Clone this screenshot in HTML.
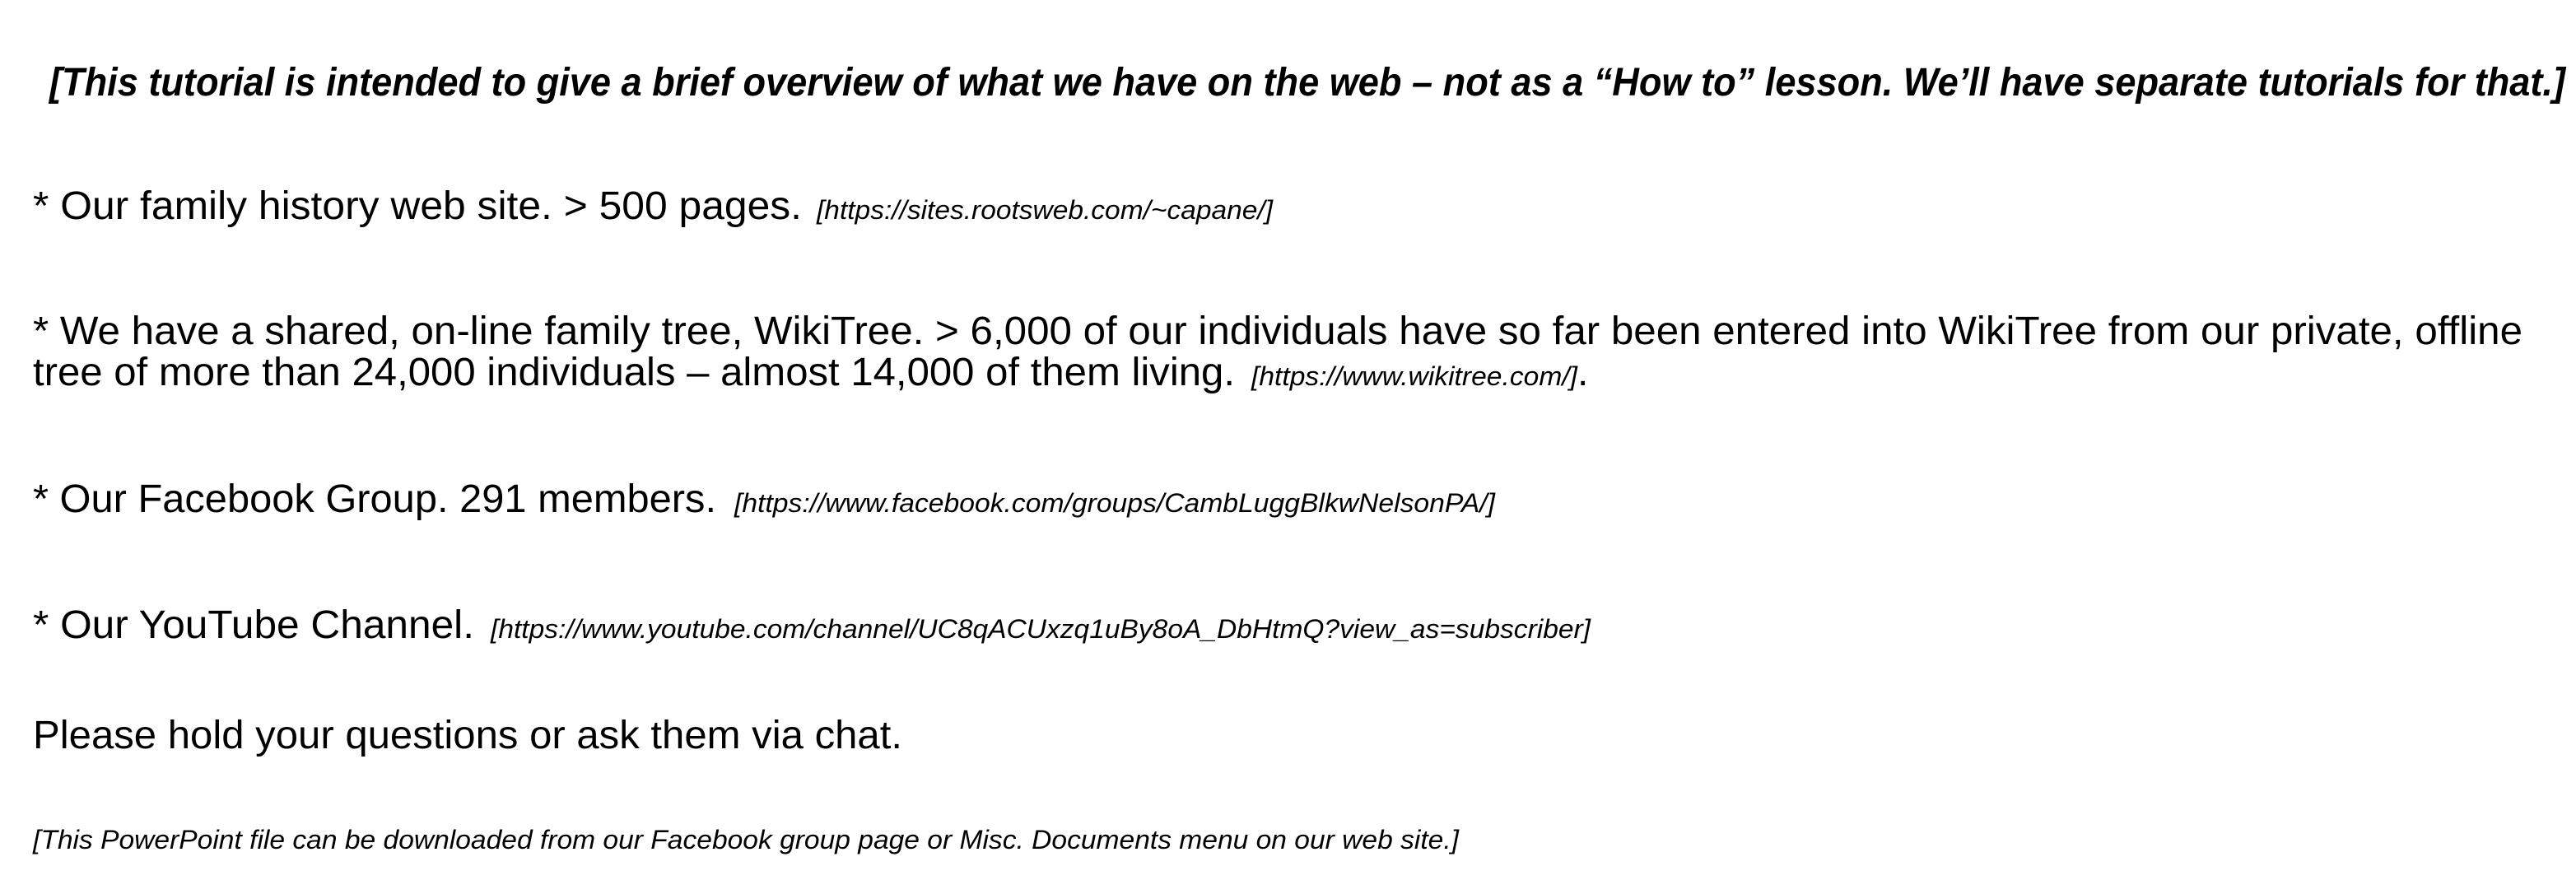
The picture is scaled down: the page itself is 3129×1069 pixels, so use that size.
<!DOCTYPE html>
<html><head><meta charset="utf-8"><style>
html,body{margin:0;padding:0;background:#fff;width:3129px;height:1069px;overflow:hidden}
svg{display:block}
text{font-family:"Liberation Sans",Arial,sans-serif;fill:#000}
.b{font-size:48px}
.u{font-size:32px;font-style:italic}
.t{font-size:48px;font-weight:bold;font-style:italic}
</style></head><body>
<svg width="3129" height="1069" viewBox="0 0 3129 1069" xmlns="http://www.w3.org/2000/svg">
<text class="t" x="60" y="116" textLength="3056" lengthAdjust="spacingAndGlyphs">[This tutorial is intended to give a brief overview of what we have on the web – not as a “How to” lesson. We’ll have separate tutorials for that.]</text>

<text class="b" x="40" y="266" textLength="934" lengthAdjust="spacingAndGlyphs">*  Our family history web site. &gt; 500 pages.</text>
<text class="u" x="992" y="266" textLength="554" lengthAdjust="spacingAndGlyphs">[https://sites.rootsweb.com/~capane/]</text>

<text class="b" x="40" y="418" textLength="3024" lengthAdjust="spacingAndGlyphs">* We have a shared, on-line family tree, WikiTree. &gt; 6,000 of our individuals have so far been entered into WikiTree from our private, offline</text>
<text class="b" x="40" y="468" textLength="1460" lengthAdjust="spacingAndGlyphs">tree of more than 24,000 individuals – almost 14,000 of them living.</text>
<text class="u" x="1520" y="468" textLength="396" lengthAdjust="spacingAndGlyphs">[https://www.wikitree.com/]</text>
<text class="b" x="1916" y="468">.</text>

<text class="b" x="40" y="622" textLength="830" lengthAdjust="spacingAndGlyphs">* Our Facebook Group. 291 members.</text>
<text class="u" x="892" y="622" textLength="924" lengthAdjust="spacingAndGlyphs">[https://www.facebook.com/groups/CambLuggBlkwNelsonPA/]</text>

<text class="b" x="40" y="775" textLength="536" lengthAdjust="spacingAndGlyphs">* Our YouTube Channel.</text>
<text class="u" x="596" y="775" textLength="1336" lengthAdjust="spacingAndGlyphs">[https://www.youtube.com/channel/UC8qACUxzq1uBy8oA_DbHtmQ?view_as=subscriber]</text>

<text class="b" x="40" y="909" textLength="1056" lengthAdjust="spacingAndGlyphs">Please hold your questions or ask them via chat.</text>

<text class="u" x="40" y="1031" textLength="1732" lengthAdjust="spacingAndGlyphs">[This PowerPoint file can be downloaded from our Facebook group page or Misc. Documents menu on our web site.]</text>
</svg>
</body></html>
